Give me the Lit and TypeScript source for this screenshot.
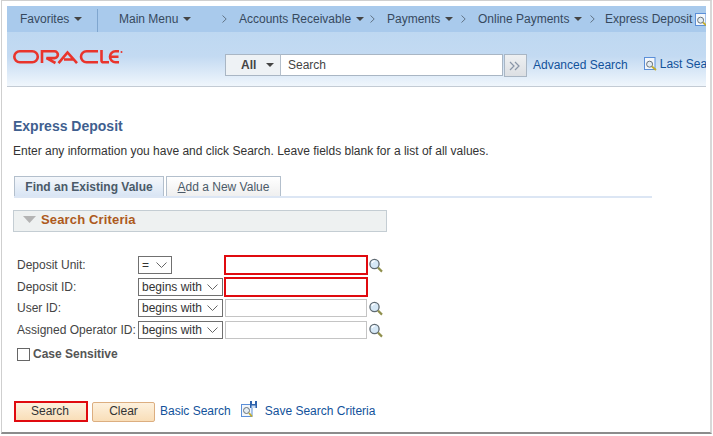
import { LitElement, html, css, svg } from "lit";
import { customElement } from "lit/decorators.js";

const caret = html`<svg class="caret" width="8" height="4" viewBox="0 0 8 4"><path d="M0 0h8L4 4z" fill="#444"/></svg>`;
const crumb = html`<svg class="crumb" width="5" height="8" viewBox="0 0 5 8"><path d="M.5.5 4.2 4 .5 7.5" fill="none" stroke="#5a6a7a" stroke-width=".9"/></svg>`;
const chev = html`<svg width="11" height="6" viewBox="0 0 11 6"><path d="M.5.5 5.5 5.5 10.5.5" fill="none" stroke="#666" stroke-width="1"/></svg>`;
const glassParts = svg`<circle cx="6.5" cy="6" r="4.6" fill="#d6e8f6" stroke="#5f6a72" stroke-width="1.3"/><path d="M4 5a2.6 2.6 0 0 1 3-2" fill="none" stroke="#fff" stroke-width="1.2"/><path d="M10 9.6 14 13.6" stroke="#8f8f4c" stroke-width="2.2"/>`;
const glass = html`<svg class="glass" width="15" height="15" viewBox="0 0 15 15">${glassParts}</svg>`;
const boxGlass = html`<svg class="boxglass" width="13" height="14" viewBox="0 0 13 14"><rect x=".5" y=".5" width="10.5" height="12" fill="#f2f6fb" stroke="#5b8fd8"/><circle cx="5.6" cy="7.2" r="3" fill="#e4edf3" stroke="#6a737a"/><path d="M8 9.5 12 13" stroke="#c2ad2e" stroke-width="1.8"/></svg>`;

@customElement("app-root")
export class AppRoot extends LitElement {
  static styles = css`
    :host { display: block; width: 713px; height: 436px; background: #fff; font: 12px "Liberation Sans", Arial, sans-serif; color: #333; overflow: hidden; }
    .window { box-sizing: border-box; width: 711px; height: 434px; margin-left: 1px; border: 1px solid #cfcfcf; border-right: 2px solid #d8d8d8; border-bottom: 2px solid #8c8c8c; padding: 5px 3px 0 5px; display: flex; flex-direction: column; }
    .head { width: 699px; overflow: hidden; flex: none; }
    .menu { height: 26px; background: #a9caec; display: flex; align-items: center; white-space: nowrap; color: #36495e; padding-left: 13px; box-sizing: border-box; }
    .menu .item { display: flex; align-items: center; gap: 5px; flex: none; }
    .fav { width: 77px; }
    .divider { width: 1px; height: 23px; background: #7fa6cf; margin-right: 21px; flex: none; margin-top: 2px; }
    .mm { width: 103px; }
    .crumb { margin-right: 12px; flex: none; }
    .ar { width: 131px; }
    .pay { width: 74px; }
    .op { width: 112px; }
    .ed { display: flex; align-items: flex-start; height: 14px; margin-left: -2px; flex: none; }
    .boxglass { flex: none; }
    .ed .boxglass { margin-top: 1px; margin-left: 3px; }
    .brand { height: 55px; border-bottom: 1px solid #c3cbd4; box-sizing: border-box; background: linear-gradient(#bed8f1 0%, #c3daf2 45%, #f0f6fc 100%); display: flex; align-items: flex-start; padding: 17px 0 0 6px; white-space: nowrap; }
    .logo { flex: none; margin-right: 100px; }
    .srch { display: flex; height: 22px; margin-top: 5px; flex: none; }
    .all { box-sizing: border-box; width: 56px; height: 22px; background: #eef2f5; border: 1px solid #a9b6c4; border-right: 1px solid #b4bfcb; display: flex; align-items: center; gap: 10px; padding-left: 15px; font-weight: bold; color: #444; }
    .q { box-sizing: border-box; width: 222px; height: 22px; background: #fff; border: 1px solid #a9b6c4; border-left: 0; padding: 3px 0 0 7px; color: #444; }
    .go { box-sizing: border-box; width: 23px; height: 23px; flex: none; margin: 5px 0 0 1px; background: linear-gradient(#eef0f2, #dcdfe3); border: 1px solid #a9b6c4; display: flex; align-items: center; justify-content: center; }
    a { color: #12529b; text-decoration: none; white-space: nowrap; }
    .adv { margin: 9px 16px 0 6px; flex: none; }
    .last { display: flex; align-items: center; gap: 3px; margin-top: 8px; flex: none; }
    .content { padding-left: 6px; display: flex; flex-direction: column; }
    h1 { margin: 31px 0 0; font-size: 14px; line-height: 16px; font-weight: bold; color: #3f5f8f; }
    .desc { margin: 10px 0 0; line-height: 14px; color: #333; }
    .tabs { margin: 18px 0 0 1px; width: 638px; height: 22px; box-sizing: border-box; border-bottom: 2px solid #dce6f4; display: flex; gap: 2px; }
    .tab { box-sizing: border-box; height: 20px; border: 1px solid #b3bfcc; border-bottom: 0; display: flex; align-items: center; justify-content: center; }
    .t1 { width: 150px; font-weight: bold; color: #4b5a68; background: linear-gradient(#f4f7fb, #d9e5f4); }
    .t2 { width: 115px; color: #4b5a68; background: linear-gradient(#fff, #efefef); }
    u { text-decoration: underline; }
    .crit { box-sizing: border-box; margin-top: 12px; width: 374px; height: 22px; background: #eef1f1; border: 1px solid #c4cdd3; display: flex; align-items: center; gap: 5px; padding: 0 0 4px 9px; font-size: 13px; font-weight: bold; color: #ad5a1c; letter-spacing: .15px; }
    .grid { margin: 22px 0 0 4px; display: grid; grid-template-columns: 121px 86px 144px 15px; grid-template-rows: 22px 21px 22px 22px; align-items: center; color: #444; }
    .sel { box-sizing: border-box; height: 18px; border: 1px solid #707070; background: #fff; display: flex; align-items: center; justify-content: space-between; padding: 0 4px 0 3px; color: #333; width: 85px; white-space: nowrap; }
    .sel.eq { width: 34px; }
    .inp { box-sizing: border-box; height: 18px; width: 142px; margin-left: 1px; border: 1px solid #c4c4c4; background: #fff; }
    .inp.req { height: 20px; width: 144px; margin-left: 0; border: 2px solid #e00a0f; }
    .glass { display: block; }
    .cs { margin: 6px 0 0 4px; display: flex; align-items: center; gap: 3px; font-weight: bold; color: #555; }
    .box { box-sizing: border-box; width: 13px; height: 13px; border: 1px solid #666; background: #fff; }
    .actions { margin: 40px 0 0 1px; display: flex; align-items: center; }
    .btn { box-sizing: border-box; height: 20px; padding-bottom: 1px; display: flex; align-items: center; justify-content: center; color: #333; background: linear-gradient(#fdf1de, #f9deb8); border: 1px solid #dcae80; border-radius: 2px; }
    .b1 { width: 74px; height: 21px; border: 2px solid #e00a0f; border-radius: 0; margin-right: 4px; padding-right: 2px; }
    .b2 { width: 63px; margin-right: 5px; }
    .actions a { margin-bottom: 1px; }
    .floppy { margin: -5px 8px 0 10px; flex: none; }
  `;

  private row(label: string, eq: boolean, req: boolean, g: boolean) {
    return html`<div>${label}</div>
      <div class="sel ${eq ? "eq" : ""}">${eq ? "=" : "begins with"}${chev}</div>
      <div class="inp ${req ? "req" : ""}"></div>
      <div>${g ? glass : ""}</div>`;
  }

  render() {
    return html`<div class="window">
      <div class="head">
        <div class="menu">
          <div class="item fav">Favorites ${caret}</div><div class="divider"></div>
          <div class="item mm">Main Menu ${caret}</div>${crumb}
          <div class="item ar">Accounts Receivable ${caret}</div>${crumb}
          <div class="item pay">Payments ${caret}</div>${crumb}
          <div class="item op">Online Payments ${caret}</div>${crumb}
          <div class="ed">Express Deposit${boxGlass}</div>
        </div>
        <div class="brand">
          <svg class="logo" width="112" height="16" viewBox="0 0 112 16" fill="none" stroke="#e9342c" stroke-width="2.6">
            <rect x="1.300" y="2.300" width="23.500" height="11" rx="5.500"/>
            <path d="M29 14V2.300h12.500a3.300 3.300 0 0 1 0 6.800H33.500l9 4.900"/>
            <path d="M45.500 14.200 54.500 3.500 64 14.200M51 10.500H60"/>
            <path d="M85 2.300H73.500a5.500 5.500 0 0 0 0 11H85"/>
            <path d="M88.500 1v10.500c0 1.200.6 1.800 2 1.800H96"/>
            <path d="M106 2.300H102.500a5.500 5.500 0 0 0 0 11H106M97.500 7.800H105.500"/>
            <circle cx="108.500" cy="3" r="1" stroke="none" fill="#e9342c"/>
          </svg>
          <div class="srch">
            <div class="all">All ${caret}</div>
            <div class="q">Search</div>
          </div>
          <div class="go"><svg width="13" height="10" viewBox="0 0 13 10"><path d="M1 1 5 5 1 9M6 1 10 5 6 9" fill="none" stroke="#8a96a8" stroke-width="1.200"/></svg></div>
          <a class="adv">Advanced Search</a>
          <a class="last">${boxGlass}Last Search Results</a>
        </div>
      </div>
      <div class="content">
        <h1>Express Deposit</h1>
        <p class="desc">Enter any information you have and click Search. Leave fields blank for a list of all values.</p>
        <div class="tabs">
          <div class="tab t1">Find an Existing Value</div>
          <div class="tab t2"><span><u>A</u>dd a New Value</span></div>
        </div>
        <div class="crit"><svg width="13" height="7" viewBox="0 0 13 7"><path d="M0 0h13L6.500 7z" fill="#b4b4b4"/></svg>Search Criteria</div>
        <div class="grid">
          ${this.row("Deposit Unit:", true, true, true)}
          ${this.row("Deposit ID:", false, true, false)}
          ${this.row("User ID:", false, false, true)}
          ${this.row("Assigned Operator ID:", false, false, true)}
        </div>
        <div class="cs"><div class="box"></div>Case Sensitive</div>
        <div class="actions">
          <div class="btn b1">Search</div>
          <div class="btn b2">Clear</div>
          <a>Basic Search</a>
          <svg class="floppy" width="16" height="16" viewBox="0 0 16 16">
            <rect x=".5" y="3.500" width="10.500" height="12" fill="#f2f6fb" stroke="#5b8fd8"/>
            <circle cx="5.500" cy="9.500" r="3" fill="#e4edf3" stroke="#6a737a"/><path d="M8 12 11 15.500" stroke="#c2ad2e" stroke-width="1.800"/>
            <rect x="9" y="0" width="7" height="7" fill="#2f63ad"/><rect x="11" y="0" width="3" height="3" fill="#fff"/><rect x="10.500" y="4.500" width="4" height="2.500" fill="#cfe0f5"/>
          </svg>
          <a>Save Search Criteria</a>
        </div>
      </div>
    </div>`;
  }
}
